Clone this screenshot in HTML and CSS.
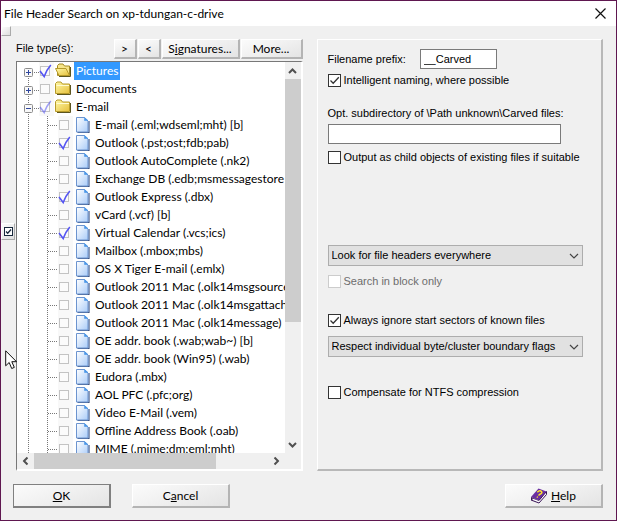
FILE: index.html
```html
<!DOCTYPE html>
<html lang="en">
<head>
<meta charset="utf-8">
<title>File Header Search on xp-tdungan-c-drive</title>
<link rel="stylesheet" href="styles.css">
</head>
<body>
<svg class="defs" aria-hidden="true">
  <defs>
    <linearGradient id="paper" x1="0" y1="0" x2="1" y2="1">
      <stop offset="0" stop-color="#ffffff"/><stop offset="1" stop-color="#a9cbf8"/>
    </linearGradient>
    <linearGradient id="gold" x1="0" y1="0" x2="1" y2="1">
      <stop offset="0" stop-color="#fff9a8"/><stop offset="1" stop-color="#e6c03c"/>
    </linearGradient>
    <symbol id="doc" viewBox="0 0 15 18">
      <path d="M1.500 16.500h11.500V5" fill="none" stroke="#3f5684" stroke-width="1.200"/>
      <path d="M.5 1.500H8.500l3.500 3.500v11H.5z" fill="url(#paper)" stroke="#6c94cf"/>
      <path d="M8.500 1.500v3h3.500z" fill="#4b97e8" stroke="#4b97e8" stroke-width=".6"/>
    </symbol>
    <symbol id="folder" viewBox="0 0 17 18">
      <path d="M2 14.500h13.500V5" fill="none" stroke="#5c5520"/>
      <path d="M.5 13.500V3.500l1.500-1.500h4l1.500 2h7v9.500z" fill="url(#gold)" stroke="#b79b2b"/>
      <path d="M1.500 5.500h12.500" stroke="#fffbd0"/>
    </symbol>
    <symbol id="folder-open" viewBox="0 0 17 18">
      <path d="M2.500 13.500V3.500l1.500-1.500h4l1.500 2h5v9.500z" fill="#f7e58a" stroke="#a48a25"/>
      <path d="M4 14.500h11.500V5" fill="none" stroke="#5c5520"/>
      <path d="M.5 6.500h10.500l3.500 7H4z" fill="url(#gold)" stroke="#b79b2b"/>
    </symbol>
    <symbol id="tick" viewBox="0 0 15 18">
      <path d="M1 9 5.200 14.500Q7.500 8 11.800 3" fill="none" stroke="#5555f2" stroke-width="1.600"/>
    </symbol>
    <symbol id="plus" viewBox="0 0 22 18">
      <path d="M11.500 0v18M17 10.500h6" stroke="#777" stroke-dasharray="1 1"/>
      <rect x="7.500" y="6.500" width="8" height="8" rx="1" fill="#f8f8f8" stroke="#8c8c8c"/>
      <path d="M9 10.500h5M11.500 8v5" stroke="#2f479e"/>
    </symbol>
    <symbol id="plus-first" viewBox="0 0 22 18">
      <path d="M11.500 14v4M17 10.500h6" stroke="#777" stroke-dasharray="1 1"/>
      <rect x="7.500" y="6.500" width="8" height="8" rx="1" fill="#f8f8f8" stroke="#8c8c8c"/>
      <path d="M9 10.500h5M11.500 8v5" stroke="#2f479e"/>
    </symbol>
    <symbol id="minus" viewBox="0 0 22 18">
      <path d="M11.500 0v18M17 10.500h6" stroke="#777" stroke-dasharray="1 1"/>
      <rect x="7.500" y="6.500" width="8" height="8" rx="1" fill="#f8f8f8" stroke="#8c8c8c"/>
      <path d="M9 10.500h5" stroke="#2f479e"/>
    </symbol>
    <symbol id="branch" viewBox="0 0 41 18">
      <path d="M11.500 0v18M30.500 0v18M31 9.500h10" stroke="#777" stroke-dasharray="1 1"/>
    </symbol>
    <symbol id="check" viewBox="0 0 13 13">
      <path d="M2.500 6.500 5.200 9.200 10.800 3.300" fill="none" stroke="#333" stroke-width="1.300"/>
    </symbol>
    <symbol id="chevron" viewBox="0 0 10 6">
      <path d="M1 1l4 4 4-4" fill="none" stroke="#444" stroke-width="1.200"/>
    </symbol>
    <symbol id="arrow" viewBox="0 0 9 6">
      <path d="M1 5l3.500-3.500L8 5" fill="none" stroke="#505050" stroke-width="2"/>
    </symbol>
  </defs>
</svg>

<div class="dialog">
  <header class="titlebar">
    <h1>File Header Search on xp-tdungan-c-drive</h1>
    <button class="close" aria-label="Close"><svg width="11" height="11" viewBox="0 0 11 11"><path d="M.5.5l10 10M10.500.5l-10 10" stroke="#111" stroke-width="1.200"/></svg></button>
  </header>

  <main class="content">
    <aside class="gutter">
      <button class="grip" aria-label="Dock"></button>
      <button class="toggle" aria-label="Toggle all"><svg width="9" height="9" viewBox="0 0 9 9"><rect x=".5" y=".5" width="8" height="8" fill="#fff" stroke="#18283c"/><path d="M2 4.500l1.700 1.700L7 2.500" fill="none" stroke="#18283c" stroke-width="1.300"/></svg></button>
    </aside>

    <section class="types">
      <div class="toolbar">
        <span class="caption" id="types-label">File type(s):</span>
        <button class="btn arrow-btn">&gt;</button>
        <button class="btn arrow-btn">&lt;</button>
        <button class="btn sig-btn">S<u>i</u>gnatures...</button>
        <button class="btn more-btn">More...</button>
      </div>
      <div class="tree">
        <ul class="rows" aria-labelledby="types-label">
          <li><svg class="guide"><use href="#plus-first"/></svg><label><span class="mark"><input type="checkbox" checked><svg><use href="#tick"/></svg></span><svg class="folder"><use href="#folder-open"/></svg><span class="name selected">Pictures</span></label></li>
          <li><svg class="guide"><use href="#plus"/></svg><label><span class="mark"><input type="checkbox"><svg><use href="#tick"/></svg></span><svg class="folder"><use href="#folder"/></svg><span class="name">Documents</span></label></li>
          <li><svg class="guide"><use href="#minus"/></svg><label><span class="mark partial"><input type="checkbox" checked><svg><use href="#tick"/></svg></span><svg class="folder"><use href="#folder"/></svg><span class="name">E-mail</span></label></li>
          <li><svg class="guide deep"><use href="#branch"/></svg><label><span class="mark"><input type="checkbox"><svg><use href="#tick"/></svg></span><svg class="doc"><use href="#doc"/></svg><span class="name">E-mail (.eml;wdseml;mht) [b]</span></label></li>
          <li><svg class="guide deep"><use href="#branch"/></svg><label><span class="mark"><input type="checkbox" checked><svg><use href="#tick"/></svg></span><svg class="doc"><use href="#doc"/></svg><span class="name">Outlook (.pst;ost;fdb;pab)</span></label></li>
          <li><svg class="guide deep"><use href="#branch"/></svg><label><span class="mark"><input type="checkbox"><svg><use href="#tick"/></svg></span><svg class="doc"><use href="#doc"/></svg><span class="name">Outlook AutoComplete (.nk2)</span></label></li>
          <li><svg class="guide deep"><use href="#branch"/></svg><label><span class="mark"><input type="checkbox"><svg><use href="#tick"/></svg></span><svg class="doc"><use href="#doc"/></svg><span class="name">Exchange DB (.edb;msmessagestore</span></label></li>
          <li><svg class="guide deep"><use href="#branch"/></svg><label><span class="mark"><input type="checkbox" checked><svg><use href="#tick"/></svg></span><svg class="doc"><use href="#doc"/></svg><span class="name">Outlook Express (.dbx)</span></label></li>
          <li><svg class="guide deep"><use href="#branch"/></svg><label><span class="mark"><input type="checkbox"><svg><use href="#tick"/></svg></span><svg class="doc"><use href="#doc"/></svg><span class="name">vCard (.vcf) [b]</span></label></li>
          <li><svg class="guide deep"><use href="#branch"/></svg><label><span class="mark"><input type="checkbox" checked><svg><use href="#tick"/></svg></span><svg class="doc"><use href="#doc"/></svg><span class="name">Virtual Calendar (.vcs;ics)</span></label></li>
          <li><svg class="guide deep"><use href="#branch"/></svg><label><span class="mark"><input type="checkbox"><svg><use href="#tick"/></svg></span><svg class="doc"><use href="#doc"/></svg><span class="name">Mailbox (.mbox;mbs)</span></label></li>
          <li><svg class="guide deep"><use href="#branch"/></svg><label><span class="mark"><input type="checkbox"><svg><use href="#tick"/></svg></span><svg class="doc"><use href="#doc"/></svg><span class="name">OS X Tiger E-mail (.emlx)</span></label></li>
          <li><svg class="guide deep"><use href="#branch"/></svg><label><span class="mark"><input type="checkbox"><svg><use href="#tick"/></svg></span><svg class="doc"><use href="#doc"/></svg><span class="name">Outlook 2011 Mac (.olk14msgsource</span></label></li>
          <li><svg class="guide deep"><use href="#branch"/></svg><label><span class="mark"><input type="checkbox"><svg><use href="#tick"/></svg></span><svg class="doc"><use href="#doc"/></svg><span class="name">Outlook 2011 Mac (.olk14msgattach</span></label></li>
          <li><svg class="guide deep"><use href="#branch"/></svg><label><span class="mark"><input type="checkbox"><svg><use href="#tick"/></svg></span><svg class="doc"><use href="#doc"/></svg><span class="name">Outlook 2011 Mac (.olk14message)</span></label></li>
          <li><svg class="guide deep"><use href="#branch"/></svg><label><span class="mark"><input type="checkbox"><svg><use href="#tick"/></svg></span><svg class="doc"><use href="#doc"/></svg><span class="name">OE addr. book (.wab;wab~) [b]</span></label></li>
          <li><svg class="guide deep"><use href="#branch"/></svg><label><span class="mark"><input type="checkbox"><svg><use href="#tick"/></svg></span><svg class="doc"><use href="#doc"/></svg><span class="name">OE addr. book (Win95) (.wab)</span></label></li>
          <li><svg class="guide deep"><use href="#branch"/></svg><label><span class="mark"><input type="checkbox"><svg><use href="#tick"/></svg></span><svg class="doc"><use href="#doc"/></svg><span class="name">Eudora (.mbx)</span></label></li>
          <li><svg class="guide deep"><use href="#branch"/></svg><label><span class="mark"><input type="checkbox"><svg><use href="#tick"/></svg></span><svg class="doc"><use href="#doc"/></svg><span class="name">AOL PFC (.pfc;org)</span></label></li>
          <li><svg class="guide deep"><use href="#branch"/></svg><label><span class="mark"><input type="checkbox"><svg><use href="#tick"/></svg></span><svg class="doc"><use href="#doc"/></svg><span class="name">Video E-Mail (.vem)</span></label></li>
          <li><svg class="guide deep"><use href="#branch"/></svg><label><span class="mark"><input type="checkbox"><svg><use href="#tick"/></svg></span><svg class="doc"><use href="#doc"/></svg><span class="name">Offline Address Book (.oab)</span></label></li>
          <li><svg class="guide deep"><use href="#branch"/></svg><label><span class="mark"><input type="checkbox"><svg><use href="#tick"/></svg></span><svg class="doc"><use href="#doc"/></svg><span class="name">MIME (.mime;dm;eml;mht)</span></label></li>
        </ul>
        <div class="vbar">
          <button aria-label="Scroll up"><svg width="9" height="6"><use href="#arrow"/></svg></button>
          <div class="track"><div class="thumb"></div></div>
          <button aria-label="Scroll down"><svg class="down" width="9" height="6"><use href="#arrow"/></svg></button>
        </div>
        <div class="hbar">
          <button aria-label="Scroll left"><svg class="left" width="9" height="6"><use href="#arrow"/></svg></button>
          <div class="track"><div class="thumb"></div></div>
          <button aria-label="Scroll right"><svg class="right" width="9" height="6"><use href="#arrow"/></svg></button>
        </div>
      </div>
    </section>

    <section class="panel">
      <div class="field-row">
        <label for="prefix">Filename prefix:</label>
        <input class="text" id="prefix" type="text" value="__Carved">
      </div>
      <label class="option naming"><span class="box"><input type="checkbox" checked><svg><use href="#check"/></svg></span>Intelligent naming, where possible</label>
      <label class="sub-label" for="subdir">Opt. subdirectory of \Path unknown\Carved files:</label>
      <input class="text subdir" id="subdir" type="text">
      <label class="option child"><span class="box"><input type="checkbox"><svg><use href="#check"/></svg></span>Output as child objects of existing files if suitable</label>
      <div class="select where">
        <select aria-label="Search scope"><option>Look for file headers everywhere</option></select>
        <svg width="10" height="6"><use href="#chevron"/></svg>
      </div>
      <label class="option block"><span class="box"><input type="checkbox" disabled><svg><use href="#check"/></svg></span>Search in block only</label>
      <label class="option ignore"><span class="box"><input type="checkbox" checked><svg><use href="#check"/></svg></span>Always ignore start sectors of known files</label>
      <div class="select">
        <select aria-label="Boundary flags"><option>Respect individual byte/cluster boundary flags</option></select>
        <svg width="10" height="6"><use href="#chevron"/></svg>
      </div>
      <label class="option ntfs"><span class="box"><input type="checkbox"><svg><use href="#check"/></svg></span>Compensate for NTFS compression</label>
    </section>
  </main>

  <footer class="actions">
    <button class="btn default"><u>O</u>K</button>
    <button class="btn">C<u>a</u>ncel</button>
    <button class="btn help">
      <svg width="16" height="16" viewBox="0 0 16 16">
        <path d="M0 9 7.500.5 15.500 3.500 8 12.500z" fill="#6a2fa0"/>
        <path d="M0 9v3.500l8 3v-3z" fill="#3b1658"/>
        <path d="M1.500 10.500 8 13l7-8.500v1.500L8 14.500l-6.500-2.500z" fill="#fff"/>
        <path d="M8 15 15.500 6.500V3.500L8 12.500" fill="none" stroke="#3b1658"/>
        <path d="M6.300 4.300Q8.500 1.800 10.300 3.300T8.500 6.500L7.500 7.500M5.800 8.800l1 .5" fill="none" stroke="#ffe629" stroke-width="1.500"/>
      </svg>
      <span><u>H</u>elp</span>
    </button>
  </footer>

  <svg class="cursor" width="13" height="20" viewBox="0 0 13 20"><path d="M.7.8v15l3.500-3.300 2.500 6 2.600-1.100-2.500-5.700h4.700z" fill="#fff" stroke="#111"/></svg>
</div>
</body>
</html>
```
FILE: styles.css
```css
* { box-sizing: border-box; }

body {
  margin: 0;
  font: 12px/16px Lato, "Open Sans", sans-serif;
  color: #000;
}

button, input, select { font: inherit; color: inherit; margin: 0; }
button { padding: 0; border: 0; background: none; }
.defs { position: absolute; width: 0; height: 0; }

.dialog {
  position: relative;
  display: flex;
  flex-direction: column;
  height: 100vh;
  background: #f0f0f0;
  border: 1px solid #5f1750;
}

.titlebar {
  display: flex;
  align-items: center;
  justify-content: space-between;
  height: 25px;
  padding: 0 10px 0 3px;
  background: #fff;
}
.titlebar h1 { margin: 0; font-size: 12px; font-weight: 400; }
.close { display: flex; }

.content {
  flex: 1;
  min-height: 0;
  display: grid;
  grid-template-columns: 15px 1fr 14px 1fr;
  padding-right: 13px;
}

.gutter {
  display: flex;
  flex-direction: column;
  justify-content: space-between;
  height: 214px;
}
.grip, .toggle {
  background: linear-gradient(135deg, #fdfdfd, #dedede);
  border: solid;
  border-width: 1px;
  border-color: #fff #aaa #aaa #fff;
}
.grip { width: 10px; height: 10px; }
.toggle { display: grid; place-items: center; width: 14px; height: 17px; }

.types {
  display: flex;
  flex-direction: column;
  gap: 2px;
  min-width: 0;
  min-height: 0;
  padding-top: 13px;
}
.toolbar { display: flex; gap: 1px; height: 20px; }
.caption {
  flex: 1;
  font-family: "Liberation Sans", sans-serif;
  font-size: 11px;
  line-height: 18px;
}

.btn {
  background: linear-gradient(160deg, #fbfbfb, #f0f0f0 50%, #e4e4e4);
  border: solid;
  border-width: 1px 2px 2px 1px;
  border-color: #fff #b4b4b4 #b4b4b4 #fff;
  white-space: nowrap;
}
.arrow-btn { width: 23px; }
.sig-btn { width: 78px; }
.more-btn { width: 62px; }

.tree {
  flex: 1;
  min-height: 0;
  display: grid;
  grid-template: 1fr 16px / 1fr 16px;
  border: solid;
  border-width: 1px 2px 2px 1px;
  border-color: #787878 #fff #fff #787878;
  background: #f0f0f0;
}
.rows {
  margin: 0;
  padding: 0;
  list-style: none;
  overflow: hidden;
  min-width: 0;
  min-height: 0;
  background: #fff;
}
.rows li, .rows label { display: flex; height: 18px; }
.guide { flex: none; width: 22px; height: 18px; }
.guide.deep { width: 41px; }
.mark { position: relative; flex: none; width: 15px; height: 18px; background: #f8f8f8; }
.mark input {
  display: block;
  appearance: none;
  width: 10px;
  height: 10px;
  margin: 4px 0 0 1px;
  border: 1px solid #c3c3c3;
  background: #fbfbfb;
}
.mark svg { position: absolute; left: 0; top: 0; width: 15px; height: 18px; display: none; }
.mark input:checked + svg { display: block; }
.mark.partial svg { opacity: .55; }
.folder { flex: none; width: 17px; height: 18px; margin: 0 2px 0 1px; }
.doc { flex: none; width: 15px; height: 18px; margin: 0 2px 0 3px; }
.name { padding: 0 2px; line-height: 18px; white-space: nowrap; }
.selected { background: #3399ff; color: #fff; }

.vbar { display: flex; flex-direction: column; }
.hbar { display: flex; }
.vbar button, .hbar button { display: grid; place-items: center; flex: none; width: 17px; height: 17px; }
.vbar button { width: 16px; }
.hbar button { height: 16px; }
.track { flex: 1; display: flex; }
.thumb { background: #cdcdcd; }
.vbar .thumb { width: 100%; height: 68%; }
.hbar .thumb { width: 78%; height: 100%; }
.down { transform: rotate(180deg); }
.left { transform: rotate(-90deg); }
.right { transform: rotate(90deg); }

.panel {
  grid-column: 4;
  display: flex;
  flex-direction: column;
  margin-top: 13px;
  padding: 9px 18px 0 10px;
  border: solid;
  border-width: 1px 2px 2px 1px;
  border-color: #fff #b8b8b8 #b8b8b8 #fff;
  font-family: "Liberation Sans", sans-serif;
  font-size: 11px;
  line-height: 15px;
  white-space: nowrap;
}
.field-row { display: flex; align-items: center; }
.field-row label { width: 92px; }
.text {
  height: 20px;
  padding: 0 3px;
  border: 1px solid #7a7a7a;
  background: #fff;
}
#prefix { width: 77px; }
.subdir { width: 233px; margin-top: 3px; }

.option { display: flex; align-items: center; gap: 3px; }
.box { position: relative; display: block; width: 13px; height: 13px; }
.box input {
  display: block;
  appearance: none;
  width: 13px;
  height: 13px;
  border: 1px solid #333;
  background: #fff;
}
.box svg { position: absolute; left: 0; top: 0; width: 13px; height: 13px; display: none; }
.box input:checked + svg { display: block; }
.box input:disabled { border-color: #ccc; }
.naming { margin-top: 4px; }
.sub-label { margin-top: 18px; }
.child { margin-top: 6px; }
.where { margin-top: 80px; }
.block { margin-top: 8px; color: #6d6d6d; }
.ignore { margin: 24px 0 8px; }
.ntfs { margin-top: 28px; }

.select { position: relative; }
.select select {
  display: block;
  appearance: none;
  width: 100%;
  height: 21px;
  padding: 0 20px 0 3px;
  border: 1px solid #adadad;
  border-radius: 0;
  background: #e1e1e1;
}
.select svg { position: absolute; right: 4px; top: 8px; pointer-events: none; }

.actions { display: flex; gap: 21px; padding: 13px 13px 12px 12px; }
.actions .btn { width: 98px; height: 24px; }
.actions .default { border: 1px solid #808080; border-right-width: 2px; border-bottom-width: 2px; }
.actions .help { display: flex; align-items: center; justify-content: center; gap: 4px; margin-left: auto; }

.cursor { position: absolute; left: 4px; top: 349px; }
```
